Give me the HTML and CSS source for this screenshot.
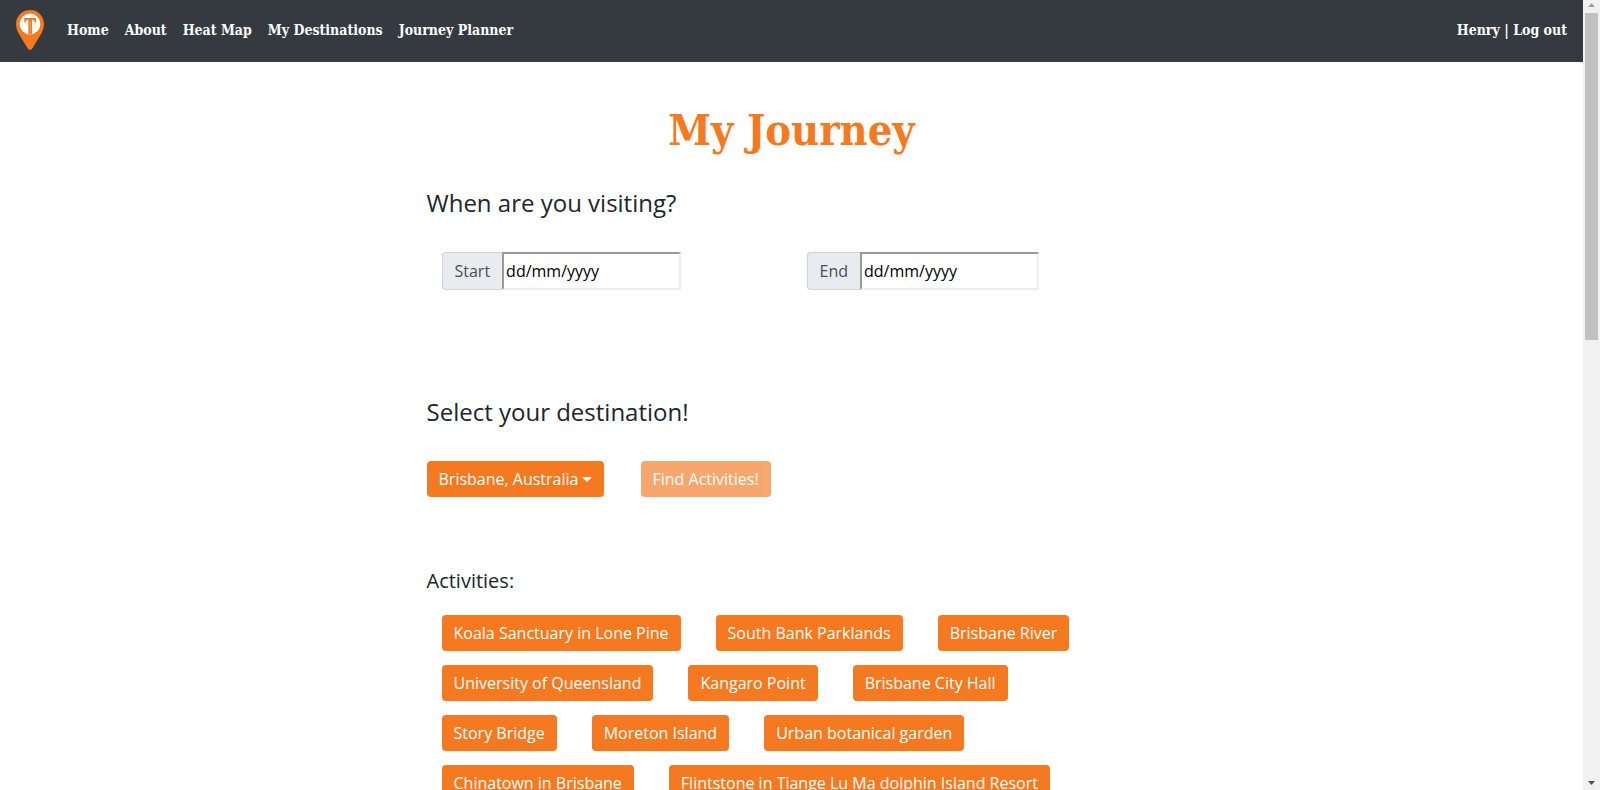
FILE: index.html
```html
<!DOCTYPE html>
<html lang="en">
<head>
<meta charset="utf-8">
<meta name="viewport" content="width=device-width, initial-scale=1">
<title>My Journey</title>
<link rel="stylesheet" href="styles.css">
</head>
<body>
<div class="window">
  <div class="page">
    <header class="navbar">
      <a class="brand" href="#" aria-label="Start page">
        <svg class="pin" viewBox="0 0 28 40" aria-hidden="true">
          <path fill="#f47920" d="M14 0C6.200 0 0 6.200 0 14c0 3.500 1.200 6.800 3.100 10.300L11.700 38.500c1.100 1.900 3.500 1.900 4.600 0L24.900 24.300C26.800 20.800 28 17.500 28 14 28 6.200 21.800 0 14 0z"/>
          <circle cx="14" cy="14" r="10.400" fill="#fff"/>
          <path fill="#f47920" d="M8.300 8h11.800v4.600h-1.200c-.2-2-1.200-2.900-2.800-2.900v14.500h-3.800V9.700c-1.600 0-2.600.9-2.800 2.900H8.300z"/>
          <path fill="#fff" d="M13.800 10.500h.8v13.700h-.8z" opacity=".3"/>
        </svg>
      </a>
      <nav class="links">
        <a href="#">Home</a>
        <a href="#">About</a>
        <a href="#">Heat Map</a>
        <a href="#">My Destinations</a>
        <a href="#">Journey Planner</a>
      </nav>
      <a class="account" href="#">Henry | Log out</a>
    </header>
    <main class="content">
      <h1 class="title">My Journey</h1>

      <section class="dates-section">
        <h2 class="heading">When are you visiting?</h2>
        <div class="dates">
          <div class="date-col">
            <label class="date-label" for="start">Start</label>
            <input class="date-input" id="start" type="text" placeholder="dd/mm/yyyy">
          </div>
          <div class="date-col">
            <label class="date-label" for="end">End</label>
            <input class="date-input" id="end" type="text" placeholder="dd/mm/yyyy">
          </div>
        </div>
      </section>

      <section class="destination-section">
        <h2 class="heading">Select your destination!</h2>
        <div class="destination">
          <div class="dropdown">
            <select class="btn dropdown-select" aria-label="Destination">
              <option>Brisbane, Australia</option>
            </select>
          </div>
          <button class="btn" type="button" disabled>Find Activities!</button>
        </div>
      </section>

      <section>
        <h3 class="subheading">Activities:</h3>
        <div class="activities">
          <button class="btn" type="button">Koala Sanctuary in Lone Pine</button>
          <button class="btn" type="button">South Bank Parklands</button>
          <button class="btn" type="button">Brisbane River</button>
          <button class="btn" type="button">University of Queensland</button>
          <button class="btn" type="button">Kangaro Point</button>
          <button class="btn" type="button">Brisbane City Hall</button>
          <button class="btn" type="button">Story Bridge</button>
          <button class="btn" type="button">Moreton Island</button>
          <button class="btn" type="button">Urban botanical garden</button>
          <button class="btn" type="button">Chinatown in Brisbane</button>
          <button class="btn" type="button">Flintstone in Tiange Lu Ma dolphin Island Resort</button>
        </div>
      </section>
    </main>
  </div>
  <div class="scrollbar" aria-hidden="true">
    <svg class="arrow" viewBox="0 0 17 13"><path fill="#a0a0a0" d="M5 7h7L8.500 3z"/></svg>
    <div class="track"><div class="thumb"></div></div>
    <svg class="arrow" viewBox="0 0 17 13"><path fill="#505050" d="M5 4h7L8.500 8z"/></svg>
  </div>
</div>
</body>
</html>
```
FILE: styles.css
```css
* { box-sizing: border-box; }

body {
  margin: 0;
  font-family: "Open Sans", sans-serif;
  font-size: 16px;
  line-height: 24px;
  color: #212529;
  background: #fff;
}

.window {
  display: flex;
  height: 100vh;
  overflow: hidden;
}

.page {
  flex: 1;
  min-width: 0;
  overflow: hidden;
}

.navbar {
  display: flex;
  align-items: center;
  padding: 9px 16px 11px;
  background: #343a40;
  font-family: "DejaVu Serif Condensed", "DejaVu Serif", serif;
  font-size: 14px;
  font-weight: bold;
}

.navbar a {
  color: #fff;
  text-decoration: none;
}

.brand { display: flex; }

.pin {
  width: 28px;
  height: 42px;
}

.links {
  flex: 1;
  display: flex;
  gap: 16px;
  padding-left: 23px;
}

.content {
  max-width: 730px;
  margin: 0 auto;
  padding-top: 38px;
}

.title {
  margin: 0;
  font-family: "DejaVu Serif Condensed", "DejaVu Serif", serif;
  font-size: 43px;
  line-height: 60px;
  text-align: center;
  color: #f47920;
}

.heading {
  margin: 0 0 35px;
  font-size: 24px;
  font-weight: 400;
  line-height: 29px;
}

.dates-section { padding: 28px 0 107px; }

.dates {
  display: grid;
  grid-template-columns: 1fr 1fr;
}

.date-col {
  display: flex;
  padding-left: 15px;
}

.date-label {
  padding: 6px 12px;
  border: 1px solid #ced4da;
  border-right: 0;
  border-radius: 4px 0 0 4px;
  background: #e9ecef;
  color: #495057;
}

.date-input {
  width: 179px;
  padding: 0 2px;
  border: 2px solid;
  border-color: #9a9a9a #eee #eee #9a9a9a;
  border-radius: 0;
  background: #fff;
  color: #000;
  font: inherit;
}

.date-input::placeholder { color: #000; opacity: 1; }

.destination {
  display: flex;
  gap: 37px;
}

.destination-section { padding-bottom: 72px; }

.btn {
  height: 36px;
  padding: 0 12px;
  border: 0;
  border-radius: 4px;
  background: #f47920;
  color: #fff;
  font: inherit;
  cursor: pointer;
}

.btn:disabled { opacity: .65; cursor: default; }

.dropdown { position: relative; }

.dropdown-select {
  appearance: none;
  padding-right: 25px;
}

.dropdown::after {
  content: "";
  position: absolute;
  right: 12px;
  top: 16px;
  border: 5px solid transparent;
  border-top-color: #fff;
  border-bottom: 0;
  pointer-events: none;
}

.subheading {
  margin: 0 0 22px;
  font-size: 20px;
  font-weight: 400;
  line-height: 24px;
}

.activities {
  display: flex;
  flex-wrap: wrap;
  gap: 14px 35px;
  padding: 0 15px;
}

.scrollbar {
  flex: none;
  display: flex;
  flex-direction: column;
  width: 17px;
  background: #f1f1f1;
}

.arrow { display: block; width: 17px; height: 13px; }

.track { flex: 1; padding: 0 2px; }

.thumb { height: 42.800%; background: #c1c1c1; }
```
